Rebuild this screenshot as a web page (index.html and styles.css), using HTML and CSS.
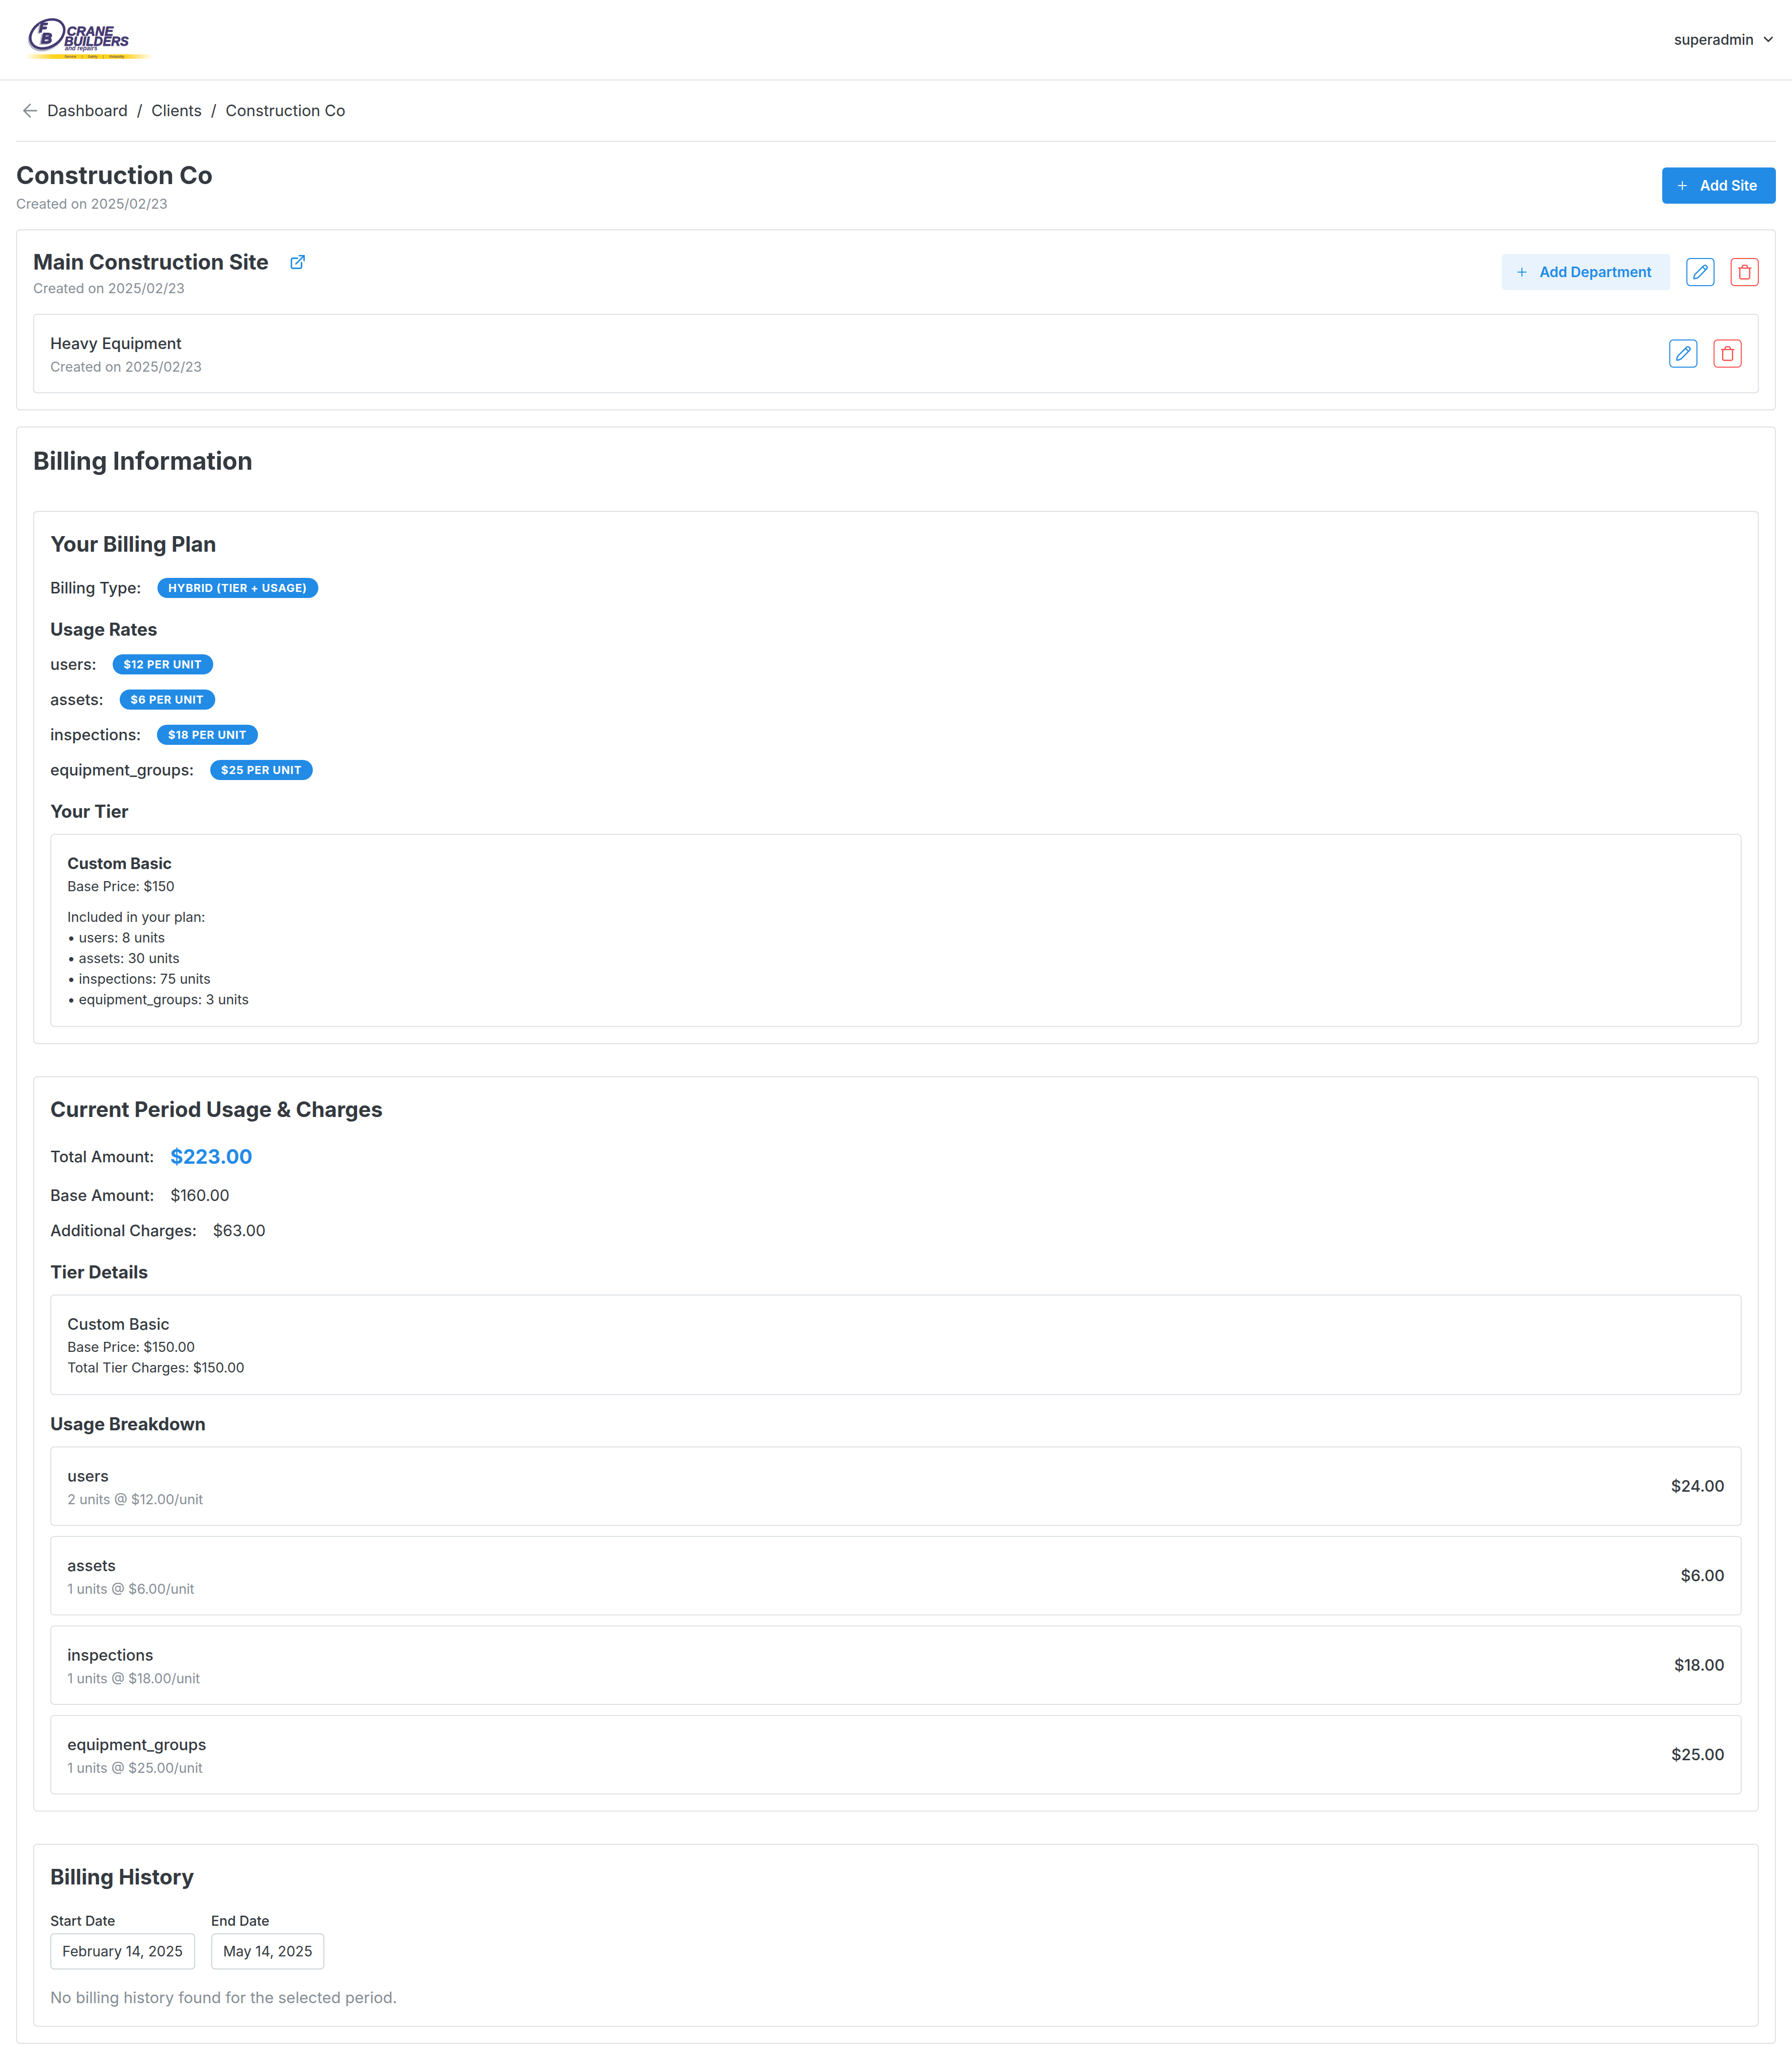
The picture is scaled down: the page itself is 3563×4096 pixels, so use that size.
FILE: index.html
```html
<!DOCTYPE html>
<html lang="en">
<head>
<meta charset="utf-8">
<meta name="viewport" content="width=device-width, initial-scale=1">
<title>Construction Co</title>
<link rel="stylesheet" href="styles.css">
</head>
<body>
<svg class="sprite" aria-hidden="true">
  <symbol id="icon-plus" viewBox="0 0 18 18"><path d="M9 1V17M1 9H17"/></symbol>
  <symbol id="icon-pencil" viewBox="12 12 32 32"><path stroke-width="2.5" d="M34.3 15.6 17.6 32.2Q15.6 34.2 14.8 41.2 21.6 40.6 24 38.2L40.3 21.7A4.3 4.3 0 0 0 34.3 15.6ZM32.3 17.6 38.3 23.7"/></symbol>
  <symbol id="icon-trash" viewBox="12 12 32 32"><path stroke-width="2.5" d="M16 20H40.4M18.2 20V38.5A3 3 0 0 0 21.2 41.5H34.8A3 3 0 0 0 37.8 38.5V20M22.8 20V18A3.5 3.5 0 0 1 26.3 14.5H30A3.5 3.5 0 0 1 33.5 18V20"/></symbol>
</svg>

<header class="topbar">
  <a class="logo" href="#" aria-label="Crane Builders and repairs">
    <svg width="280" height="120" viewBox="0 0 280 120">
      <defs>
        <linearGradient id="band" x1="0" x2="1" y1="0" y2="0">
          <stop offset="0" stop-color="#ffd21f" stop-opacity="0"/>
          <stop offset="0.22" stop-color="#ffd21f"/>
          <stop offset="0.78" stop-color="#ffd21f"/>
          <stop offset="1" stop-color="#ffd21f" stop-opacity="0"/>
        </linearGradient>
      </defs>
      <ellipse cx="52" cy="52" rx="36" ry="26" transform="rotate(-30 52 52)" fill="none" stroke="#b3b8c4" stroke-width="5"/>
      <ellipse cx="54" cy="48.500" rx="36" ry="26" transform="rotate(-30 54 48.500)" fill="#fff" stroke="#453a72" stroke-width="5"/>
      <g class="logo-mark">
        <text x="38" y="45" font-size="26">F</text>
        <text x="42" y="67" font-size="30">B</text>
      </g>
      <g class="logo-word">
        <text x="93" y="52" font-size="26">CRANE</text>
        <text x="88" y="72" font-size="25">BUILDERS</text>
      </g>
      <text x="89" y="81" font-size="12">and repairs</text>
      <rect x="10" y="89" width="254" height="9" fill="url(#band)"/>
      <g class="logo-tag" font-size="7">
        <text x="88" y="96">Service</text><text x="122" y="96">|</text>
        <text x="134" y="96">Safety</text><text x="164" y="96">|</text>
        <text x="177" y="96">Reliability</text>
      </g>
    </svg>
  </a>
  <button class="user" type="button">superadmin
    <svg width="18" height="12" viewBox="0 0 18 12"><path d="M1.500 1.500 9 9 16.500 1.500"/></svg>
  </button>
</header>

<main class="page">
  <nav class="crumbs" aria-label="Breadcrumb">
    <a class="back" href="#" aria-label="Back"><svg width="30" height="28" viewBox="0 0 30 28"><path d="M26.500 14H1.500M14 1.500 1.500 14 14 26.500"/></svg></a>
    <a href="#">Dashboard</a><span>/</span><a href="#">Clients</a><span>/</span><a href="#" aria-current="page">Construction Co</a>
  </nav>

  <div class="bar">
    <div>
      <h1 class="h-page">Construction Co</h1>
      <p class="muted">Created on 2025/02/23</p>
    </div>
    <button class="btn btn-primary" type="button"><svg width="18" height="18"><use href="#icon-plus"/></svg>Add Site</button>
  </div>

  <section class="card site">
    <div class="bar">
      <div>
        <div class="site-name">
          <h2 class="h-site">Main Construction Site</h2>
          <a class="open" href="#" aria-label="Open site"><svg width="28" height="28" viewBox="0 0 28 28"><path d="M13.500 6.500H4.300A3 3 0 0 0 1.300 9.500V23.500A3 3 0 0 0 4.300 26.500H18.500A3 3 0 0 0 21.500 23.500V15M10.500 17.500 26.500 1.500M17 1.300H26.700V11"/></svg></a>
        </div>
        <p class="muted">Created on 2025/02/23</p>
      </div>
      <div class="actions">
        <button class="btn btn-light" type="button"><svg width="18" height="18"><use href="#icon-plus"/></svg>Add Department</button>
        <button class="icon-btn" type="button" aria-label="Edit site"><svg width="32" height="32"><use href="#icon-pencil"/></svg></button>
        <button class="icon-btn danger" type="button" aria-label="Delete site"><svg width="32" height="32"><use href="#icon-trash"/></svg></button>
      </div>
    </div>
    <div class="card bar">
      <div>
        <h3 class="strong">Heavy Equipment</h3>
        <p class="muted">Created on 2025/02/23</p>
      </div>
      <div class="actions">
        <button class="icon-btn" type="button" aria-label="Edit department"><svg width="32" height="32"><use href="#icon-pencil"/></svg></button>
        <button class="icon-btn danger" type="button" aria-label="Delete department"><svg width="32" height="32"><use href="#icon-trash"/></svg></button>
      </div>
    </div>
  </section>

  <section class="card billing">
    <h2 class="h-page">Billing Information</h2>

    <section class="card">
      <h3 class="h-section">Your Billing Plan</h3>
      <div class="row"><span class="strong">Billing Type:</span><span class="badge">HYBRID (TIER + USAGE)</span></div>
      <h4 class="h-sub">Usage Rates</h4>
      <div class="rows">
        <div class="row"><span class="strong">users:</span><span class="badge">$12 PER UNIT</span></div>
        <div class="row"><span class="strong">assets:</span><span class="badge">$6 PER UNIT</span></div>
        <div class="row"><span class="strong">inspections:</span><span class="badge">$18 PER UNIT</span></div>
        <div class="row"><span class="strong">equipment_groups:</span><span class="badge">$25 PER UNIT</span></div>
      </div>
      <h4 class="h-sub">Your Tier</h4>
      <div class="card">
        <p class="bold">Custom Basic</p>
        <p class="small">Base Price: $150</p>
        <p class="small included">Included in your plan:</p>
        <ul class="small plan-list">
          <li>• users: 8 units</li>
          <li>• assets: 30 units</li>
          <li>• inspections: 75 units</li>
          <li>• equipment_groups: 3 units</li>
        </ul>
      </div>
    </section>

    <section class="card">
      <h3 class="h-section">Current Period Usage &amp; Charges</h3>
      <div class="rows">
        <div class="row"><span class="strong">Total Amount:</span><span class="total">$223.00</span></div>
        <div class="row"><span class="strong">Base Amount:</span><span>$160.00</span></div>
        <div class="row"><span class="strong">Additional Charges:</span><span>$63.00</span></div>
      </div>
      <h4 class="h-sub">Tier Details</h4>
      <div class="card">
        <p class="strong">Custom Basic</p>
        <p class="small">Base Price: $150.00</p>
        <p class="small">Total Tier Charges: $150.00</p>
      </div>
      <h4 class="h-sub">Usage Breakdown</h4>
      <div class="rows">
        <div class="card bar"><div><p class="strong">users</p><p class="muted">2 units @ $12.00/unit</p></div><span class="strong">$24.00</span></div>
        <div class="card bar"><div><p class="strong">assets</p><p class="muted">1 units @ $6.00/unit</p></div><span class="strong">$6.00</span></div>
        <div class="card bar"><div><p class="strong">inspections</p><p class="muted">1 units @ $18.00/unit</p></div><span class="strong">$18.00</span></div>
        <div class="card bar"><div><p class="strong">equipment_groups</p><p class="muted">1 units @ $25.00/unit</p></div><span class="strong">$25.00</span></div>
      </div>
    </section>

    <section class="card">
      <h3 class="h-section">Billing History</h3>
      <div class="dates">
        <div class="field"><label for="start">Start Date</label><button id="start" class="date" type="button">February 14, 2025</button></div>
        <div class="field"><label for="end">End Date</label><button id="end" class="date" type="button">May 14, 2025</button></div>
      </div>
      <p class="empty">No billing history found for the selected period.</p>
    </section>
  </section>
</main>
</body>
</html>
```
FILE: styles.css
```css
:root {
  --text: #343a40;
  --muted: #868e96;
  --line: #dee2e6;
  --blue: #228be6;
  --red: #fa5252;
}

* { box-sizing: border-box; margin: 0; padding: 0; }

body {
  background: #fff;
  color: var(--text);
  font-family: Inter, "Liberation Sans", sans-serif;
  font-size: 31px;
  line-height: 50px;
}

a { color: inherit; text-decoration: none; }
button { font: inherit; color: inherit; background: none; border: 0; }
ul { list-style: none; }
svg { display: block; flex: none; fill: none; stroke: currentColor; stroke-width: 2; stroke-linecap: round; stroke-linejoin: round; }
.sprite { position: absolute; width: 0; height: 0; }

/* Top bar */
.topbar {
  display: flex;
  align-items: center;
  justify-content: space-between;
  height: 160px;
  padding: 0 38px 0 40px;
  border-bottom: 2px solid var(--line);
}
.logo svg { stroke: none; }
.logo text { font-family: "Liberation Sans", Arial, sans-serif; font-weight: 700; font-style: italic; fill: #453a72; }
.logo-mark { stroke: #453a72; stroke-width: 2; filter: drop-shadow(-3px 2px 0 #b3b8c4); }
.logo-word { stroke: #453a72; stroke-width: 1; }
.logo .logo-tag text { font-weight: 400; }
.user { display: flex; align-items: center; gap: 20px; font-size: 28px; font-weight: 500; }
.user svg { stroke-width: 3; }

/* Page frame */
.page { padding: 0 32px 32px; }
.crumbs {
  display: flex;
  align-items: center;
  gap: 18px;
  height: 122px;
  padding-left: 14px;
  margin-bottom: 32px;
  border-bottom: 2px solid var(--line);
}
.back { color: var(--muted); }
.back svg { stroke-width: 3; }

.bar { display: flex; align-items: center; justify-content: space-between; }
.actions { display: flex; align-items: center; gap: 32px; }
.card { padding: 32px; border: 2px solid var(--line); border-radius: 8px; }
.page > .card { margin-top: 32px; }
.site > .card { margin-top: 32px; }
.site-name { display: flex; align-items: center; gap: 44px; }
.open { color: var(--blue); }
.open svg { stroke-width: 3; }

/* Type */
.h-page { font-size: 49px; line-height: 70px; font-weight: 700; }
.h-site { font-size: 42px; line-height: 62px; font-weight: 700; }
.h-section { font-size: 42px; line-height: 64px; font-weight: 700; margin-bottom: 30px; }
.h-sub { font-size: 35px; line-height: 50px; font-weight: 700; margin: 32px 0 20px; }
.strong { font-size: 31px; font-weight: 500; }
.bold { font-weight: 700; }
.muted { font-size: 27px; line-height: 44px; margin-bottom: -4px; color: var(--muted); }
.small { font-size: 27px; line-height: 41px; }
.total { font-size: 39px; line-height: 64px; font-weight: 700; color: var(--blue); }
.included { margin-top: 20px; }

/* Buttons */
.btn {
  display: flex;
  align-items: center;
  gap: 26px;
  height: 72px;
  padding: 0 37px 0 31px;
  border-radius: 8px;
  font-size: 28px;
  font-weight: 600;
}
.btn-primary { background: var(--blue); color: #fff; }
.btn-light { background: #e8f3fd; color: var(--blue); }
.icon-btn {
  display: grid;
  place-items: center;
  width: 56px;
  height: 56px;
  border: 2px solid currentColor;
  border-radius: 8px;
  color: var(--blue);
}
.danger { color: var(--red); }

/* Billing */
.billing > .h-page { margin-bottom: 64px; }
.billing > .card + .card { margin-top: 64px; }
.row { display: flex; align-items: center; gap: 32px; }
.rows { display: grid; gap: 20px; }
.badge {
  height: 40px;
  padding: 0 22px;
  border-radius: 20px;
  background: var(--blue);
  color: #fff;
  font-size: 22px;
  line-height: 40px;
  font-weight: 700;
  letter-spacing: 1px;
}

/* History */
.dates { display: flex; gap: 32px; margin: 36px 0 32px; }
.field { display: grid; justify-items: start; gap: 4px; font-size: 28px; line-height: 40px; }
.field label { font-weight: 500; font-size: 27px; }
.date { height: 72px; padding: 0 22px; border: 2px solid #ced4da; border-radius: 8px; }
.h-section:has(+ .dates) { margin-bottom: 0; }
.empty { line-height: 48px; color: var(--muted); }
```
